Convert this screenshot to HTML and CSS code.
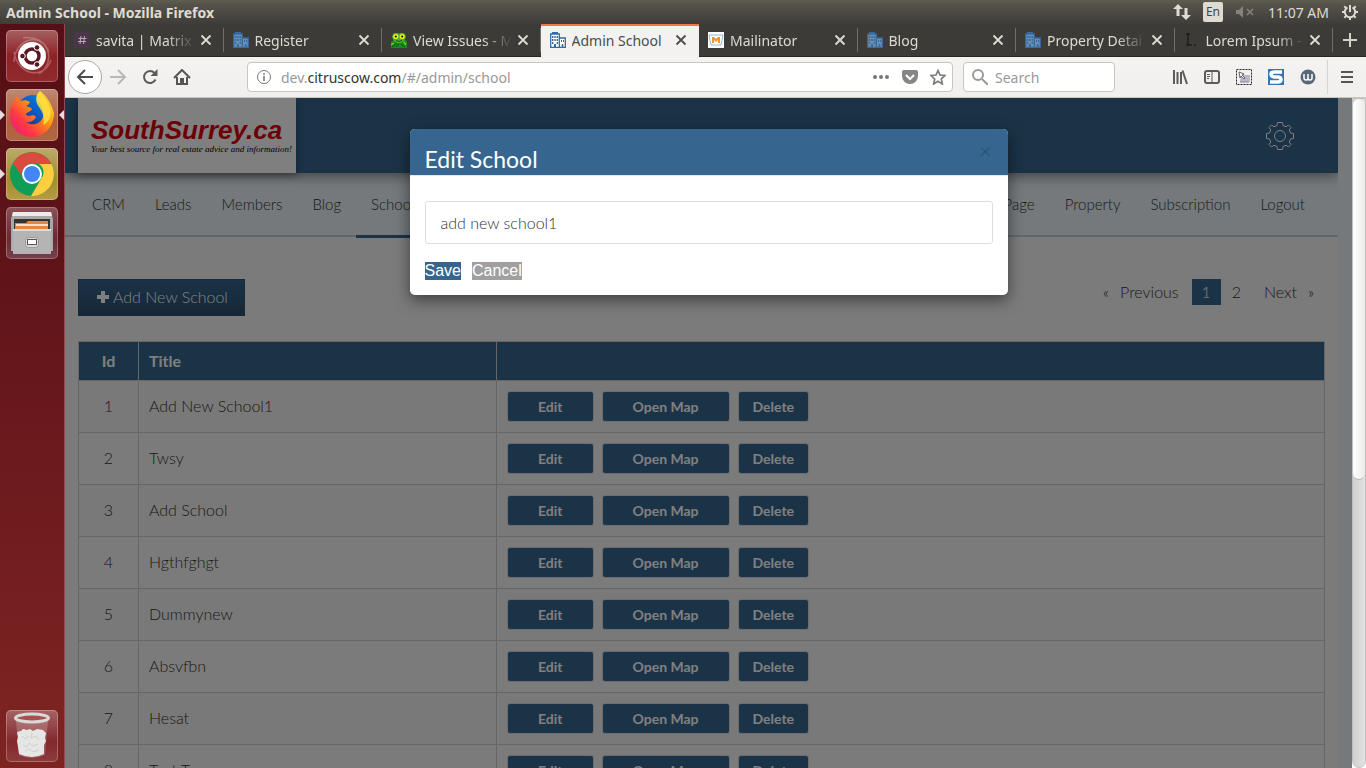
FILE: index.html
```html
<!DOCTYPE html>
<html lang="en">
<head>
<meta charset="utf-8">
<title>Admin School</title>
<link rel="stylesheet" href="styles.css">
</head>
<body>
<svg class="defs" width="0" height="0" aria-hidden="true">
  <symbol id="building" viewBox="0 0 16 16">
    <path class="wall" d="M1 2h8v13H1zM10 6h5v9h-5z"/>
    <path d="M2 .7h6M.7 15.500V2h8.600v13.500M9.500 6h5.800v9.500M0 15.500h16" stroke="#356b9f" stroke-width="1.300" fill="none"/>
    <path d="M2 4h1.400v2H2zM4.300 4h1.400v2H4.300zM6.600 4H8v2H6.600zM2 7h1.400v2H2zM4.300 7h1.400v2H4.300zM6.600 7H8v2H6.600zM2 10h1.400v2H2zM6.600 10H8v2H6.600zM4 12h2v3.500H4zM11 8h1v2h-1zM13 8h1v2h-1zM11.700 12h1.600v3.500h-1.600z" fill="#356b9f"/>
  </symbol>
  <symbol id="x" viewBox="0 0 12 12"><path d="M1.500 1.500l9 9M10.500 1.500l-9 9" stroke="currentColor" stroke-width="1.800" fill="none"/></symbol>
</svg>

<header class="panel">
  <span class="panel-title">Admin School - Mozilla Firefox</span>
  <div class="indicators">
    <svg width="18" height="18" viewBox="0 0 18 18" fill="#dfdbd2"><path d="M5 1L0 6h3.500v7h3V6H10zM13 17l5-5h-3.500V5h-3v7H8z"/></svg>
    <span class="lang">En</span>
    <svg class="mute" width="18" height="12" viewBox="0 0 18 12"><path d="M0 4h3l4-4v12L3 8H0z" fill="#85827a"/><path d="M11 3l6 6M17 3l-6 6" stroke="#85827a" stroke-width="1.500"/></svg>
    <span class="clock">11:07 AM</span>
    <svg width="16" height="16" viewBox="0 0 16 16" fill="none" stroke="#dfdbd2"><path d="M5.500 3.400a5.200 5.200 0 1 0 5 0" stroke-width="2"/><path d="M8 1v7" stroke-width="2"/><path d="M0 8h2M14 8h2M8 14v2M2.300 2.300l1.600 1.600M13.700 2.300l-1.600 1.600M2.300 13.700l1.600-1.600M13.700 13.700l-1.600-1.600" stroke-width="2"/></svg>
  </div>
</header>

<div class="desktop">
  <aside class="launcher">
    <div class="app dash">
      <svg width="52" height="52" viewBox="0 0 52 52"><g fill="none" stroke="#e5b3b3" stroke-opacity=".4" stroke-width="1.500"><path d="M8 32C8 10 34 0 43 22M17 8c26-4 34 24 16 36M45 30C38 50 12 46 8 22"/></g><circle cx="26" cy="26" r="14" fill="#fff"/><circle cx="26" cy="26" r="7" fill="none" stroke="#5b1820" stroke-width="3.500"/><g fill="#5b1820" stroke="#fff"><circle cx="16.500" cy="26" r="2.800"/><circle cx="31" cy="17.500" r="2.800"/><circle cx="31" cy="34.500" r="2.800"/></g></svg>
    </div>
    <div class="app fox running focused">
      <svg width="52" height="52" viewBox="0 0 52 52">
        <defs><linearGradient id="fx" x1="1" y1="0" x2="0" y2="1"><stop offset="0" stop-color="#fff44f"/><stop offset=".4" stop-color="#ff980e"/><stop offset=".7" stop-color="#ff3647"/><stop offset="1" stop-color="#e31587"/></linearGradient><linearGradient id="fb" x1="1" y1="0" x2="0" y2="1"><stop offset="0" stop-color="#0090ff"/><stop offset="1" stop-color="#1b2080"/></linearGradient></defs>
        <circle cx="27" cy="22" r="16" fill="url(#fb)"/>
        <path d="M11 7c1 3 2 4 4 5 3-1 6-1 9 1-1 2-2 3-4 4 2 1 5 1 6 3-1 3-5 3-6 5 0 1 1 2 3 2 3 0 4-2 7 1-2 4-6 6-10 5 6 4 14 3 17-5 2-6-1-11-5-16-2-4-1-7 2-10 4 3 11 10 14 22 0 14-10 24-22 24S4 39 4 26c0-7 3-14 7-19z" fill="url(#fx)"/>
        <path d="M34 2c3 6 8 11 10 17 2 8-1 14-7 17 2-7 0-13-4-18-4-6-4-11 1-16z" fill="#ffe23e" fill-opacity=".85"/>
      </svg>
    </div>
    <div class="app chrome running">
      <svg width="52" height="52" viewBox="0 0 52 52"><circle cx="26" cy="26" r="22" fill="#109d58"/><path d="M7 15A22 22 0 0 1 45.500 16H26a10 10 0 0 0-9 14z" fill="#db4a3e"/><path d="M45.500 16A22 22 0 0 1 25 48l10-17a10 10 0 0 0-2-15z" fill="#ffcd40"/><circle cx="26" cy="26" r="10" fill="#fff"/><circle cx="26" cy="26" r="8" fill="#4285f4"/></svg>
    </div>
    <div class="app files">
      <svg width="52" height="52" viewBox="0 0 52 52"><path d="M7 5h38l2 7v32H5V12z" fill="#a9a9a9"/><path d="M7 5h38l1 4H6z" fill="#ececec"/><path d="M8 12h36v12H8z" fill="#333"/><path d="M9 16h11l2-2h20v9H9z" fill="#f0833a"/><path d="M10 18h32" stroke="#fff" stroke-width="1.500"/><path d="M7 22h38v25H7z" fill="#b4b4b4"/><path d="M7 22h38v2H7z" fill="#dcdcdc"/><rect x="19.500" y="30.500" width="13" height="10" rx="3" fill="#d9d9d9" stroke="#999"/><rect x="21.500" y="32.500" width="9" height="5" fill="#fff" stroke="#555"/></svg>
    </div>
    <div class="app trash">
      <svg width="52" height="52" viewBox="0 0 52 52"><path d="M10 11l3 34q13 6 26 0l3-34z" fill="#fff" fill-opacity=".2"/><path d="M11 22l4-1 2-2 4 1 3-1 3 2 4-2 6 1 3 3-1 5 1 3-2 4v9q-12 6-25 0l-1-7-1-6 1-4z" fill="#e6e7e4"/><path d="M16 26l3 3 4-3M26 23l-1 5 5-2 3 4M17 35l4 2 2-4 4 3 5-2M19 41l4-2 4 3 6-2" fill="none" stroke="#cdd0cb"/><ellipse cx="26" cy="8" rx="16.500" ry="4" fill="#a85050" stroke="#d8dad7" stroke-width="3"/></svg>
    </div>
  </aside>

  <main class="window">
    <nav class="tabs" aria-label="Browser tabs">
      <div class="tab"><svg width="16" height="16"><rect width="16" height="16" fill="#4a3549"/><path d="M7 4L6 12M10.500 4l-1 8M4.500 6.500h8M4 9.500h8" stroke="#b9a9b8"/></svg><span>savita | Matrix</span><button aria-label="Close tab"><svg width="12" height="12"><use href="#x"/></svg></button></div>
      <div class="tab"><svg width="16" height="16"><use href="#building"/></svg><span>Register</span><button aria-label="Close tab"><svg width="12" height="12"><use href="#x"/></svg></button></div>
      <div class="tab"><svg width="16" height="16" viewBox="0 0 16 16"><path d="M0 10l4-3h8l4 2v7H0z" fill="#1c8a22"/><path d="M2 2l2-1h3l1 1 1-1h3l2 1 1 3-2 4-3 2H6L3 9 1 5z" fill="#4bb52b"/><circle cx="4.800" cy="4.500" r="2.500" fill="#f8ec1e"/><circle cx="11.200" cy="4.500" r="2.500" fill="#f8ec1e"/><circle cx="4.800" cy="4.500" r="1"/><circle cx="11.200" cy="4.500" r="1"/><path d="M5 8.500q3 2 6 0M1 15l5-4M10 12l4 3M5 15l3-3" stroke="#0b5010" fill="none"/><path d="M0 13l3-2M13 10l2 3" stroke="#5fd030" stroke-width="1.500"/></svg><span>View Issues - M</span><button aria-label="Close tab"><svg width="12" height="12"><use href="#x"/></svg></button></div>
      <div class="tab active"><svg width="16" height="16"><use href="#building"/></svg><span>Admin School</span><button aria-label="Close tab"><svg width="12" height="12"><use href="#x"/></svg></button></div>
      <div class="tab"><svg width="16" height="16" viewBox="0 0 16 16"><path fill="#fff" d="M0 0h16v16H0z"/><path d="M1 3h14l-2 10H3z" fill="none" stroke="#8fb4df"/><path d="M4 11V5h2l2 2 2-2h2v6h-2V8l-2 2-2-2v3z" fill="#f0952b"/></svg><span>Mailinator</span><button aria-label="Close tab"><svg width="12" height="12"><use href="#x"/></svg></button></div>
      <div class="tab"><svg width="16" height="16"><use href="#building"/></svg><span>Blog</span><button aria-label="Close tab"><svg width="12" height="12"><use href="#x"/></svg></button></div>
      <div class="tab"><svg width="16" height="16"><use href="#building"/></svg><span>Property Detai</span><button aria-label="Close tab"><svg width="12" height="12"><use href="#x"/></svg></button></div>
      <div class="tab"><svg width="16" height="16"><path d="M2 2h4M4 2v11M2 13h6M10 13h2" stroke="#111" fill="none"/></svg><span>Lorem Ipsum -</span><button aria-label="Close tab"><svg width="12" height="12"><use href="#x"/></svg></button></div>
      <button class="new-tab" aria-label="New tab"><svg width="16" height="16"><path d="M8 1v14M1 8h14" stroke="#d4d1c9" stroke-width="2"/></svg></button>
    </nav>

    <div class="toolbar">
      <button class="back" aria-label="Back"><svg width="18" height="16" fill="none" stroke="#4c4c4c" stroke-width="2"><path d="M17 8H2M9 1L2 8l7 7"/></svg></button>
      <button class="tool" aria-label="Forward"><svg width="18" height="16" fill="none" stroke="#b9b8b7" stroke-width="2"><path d="M1 8h15M9 1l7 7-7 7"/></svg></button>
      <button class="tool" aria-label="Reload"><svg width="16" height="16" fill="none" stroke="#5a5a5a" stroke-width="2"><path d="M13.500 10.500A6 6 0 1 1 12.500 4"/><path d="M15.500 0v7h-7z" fill="#5a5a5a" stroke="none"/></svg></button>
      <button class="tool" aria-label="Home"><svg width="18" height="16" fill="none" stroke="#555" stroke-width="2"><path d="M1 9l8-8 8 8M4 8v7h10V8"/><path d="M8 15v-5h2v5" /></svg></button>
      <div class="urlbar">
        <svg width="16" height="16" fill="none" stroke="#777"><circle cx="8" cy="8" r="6.500"/><path d="M8 7v5M8 4v1.800" stroke-width="1.600"/></svg>
        <span class="url">dev.<b>citruscow.com</b>/#/admin/school</span>
        <svg width="18" height="6" fill="#777"><circle cx="3" cy="3" r="2"/><circle cx="9" cy="3" r="2"/><circle cx="15" cy="3" r="2"/></svg>
        <svg width="16" height="16"><path d="M2 1h12q2 0 2 2v4a8 8 0 0 1-16 0V3q0-2 2-2z" fill="#858585"/><path d="M4 6l4 4 4-4" stroke="#fff" stroke-width="2" fill="none"/></svg>
        <svg width="16" height="16" viewBox="0 0 16 16"><path d="M8 1.500l2 4.500 5 .5-3.700 3.400 1 5L8 12.300 3.700 15l1-5L1 6.500 6 6z" fill="none" stroke="#7d7d7d" stroke-width="1.700"/></svg>
      </div>
      <div class="search"><svg width="16" height="16" fill="none" stroke="#999" stroke-width="2"><circle cx="6" cy="6" r="5"/><path d="M10 10l6 6"/></svg><input type="text" placeholder="Search" aria-label="Search"></div>
      <div class="extensions">
        <svg width="16" height="16" fill="none" stroke="#5b5b5b" stroke-width="2"><path d="M2 1v14M5.500 3v12M9 3v12M10.500 1.500L15 15"/></svg>
        <svg width="16" height="16" fill="none" stroke="#5b5b5b"><rect x="1" y="2" width="14" height="12" rx="2" stroke-width="2"/><path d="M8 2v12M3 5.500h3M3 7.500h3M3 9.500h2"/></svg>
        <svg width="16" height="16" fill="none"><rect x=".5" y=".5" width="15" height="15" stroke="#222" stroke-dasharray="2 1"/><path fill="#b7bac9" d="M6 6h8v7H4v-2z"/><path d="M3 3l5 2-2 1 3 3-1 1-3-3-1 2z" fill="#fff" stroke="#444" stroke-width=".8"/><path d="M4 13h9" stroke="#888"/></svg>
        <svg width="16" height="16"><path d="M0 0h16v16H0z" fill="#3178b4"/><path d="M14 3H6.500Q3 3 3 5.200T6.500 8h3Q13 8 13 10.500T9.500 13H2" fill="none" stroke="#fff" stroke-width="3.500"/></svg>
        <svg width="16" height="16"><circle cx="8" cy="8" r="7.500" fill="#596779"/><path d="M4 5v4q0 2 2 2t2-2V5v4q0 2 2 2t2-2V5" fill="none" stroke="#fff" stroke-width="1.500"/></svg>
      </div>
      <button class="menu" aria-label="Menu"><svg width="12" height="14"><path d="M0 2h12M0 7h12M0 12h12" stroke="#555" stroke-width="2"/></svg></button>
    </div>

    <div class="viewport">
      <div class="page">
        <div class="site">
          <div class="site-header">
            <div class="logo"><strong>SouthSurrey.ca</strong><em>Your best source for real estate advice and information!</em></div>
            <svg class="gear" width="30" height="30" viewBox="0 0 30 30" fill="none" stroke="#fff"><circle cx="15" cy="15" r="5.500"/><path d="M12.500 1.500h5l.5 3 3 1.300 2.500-1.800 2.500 2.500-1.800 2.500 1.300 3 3 .5v5l-3 .5-1.300 3 1.800 2.500-2.500 2.500-2.500-1.800-3 1.300-.5 3h-5l-.5-3-3-1.300L6.500 26 4 23.500 5.800 21l-1.300-3-3-.5v-5l3-.5 1.300-3L4 6.500 6.500 4 9 5.800l3-1.300z"/></svg>
          </div>
          <nav class="site-nav">
            <a href="#">CRM</a><a href="#">Leads</a><a href="#">Members</a><a href="#">Blog</a><a href="#" class="current">Schools</a>
            <a href="#" class="push">Page</a><a href="#">Property</a><a href="#">Subscription</a><a href="#">Logout</a>
          </nav>
          <div class="content">
            <div class="actions">
              <button class="add"><svg width="12" height="12"><path d="M6 0v12M0 6h12" stroke="#fff" stroke-width="4"/></svg>Add New School</button>
              <div class="pager"><small>«</small><a href="#">Previous</a><a href="#" class="on">1</a><a href="#" class="num">2</a><a href="#" class="next">Next</a><small>»</small></div>
            </div>
            <table>
              <thead><tr><th class="id">Id</th><th class="title">Title</th><th></th></tr></thead>
              <tbody>
                <tr><td>1</td><td>Add New School1</td><td><div class="row-buttons"><button>Edit</button><button>Open Map</button><button>Delete</button></div></td></tr>
                <tr><td>2</td><td>Twsy</td><td><div class="row-buttons"><button>Edit</button><button>Open Map</button><button>Delete</button></div></td></tr>
                <tr><td>3</td><td>Add School</td><td><div class="row-buttons"><button>Edit</button><button>Open Map</button><button>Delete</button></div></td></tr>
                <tr><td>4</td><td>Hgthfghgt</td><td><div class="row-buttons"><button>Edit</button><button>Open Map</button><button>Delete</button></div></td></tr>
                <tr><td>5</td><td>Dummynew</td><td><div class="row-buttons"><button>Edit</button><button>Open Map</button><button>Delete</button></div></td></tr>
                <tr><td>6</td><td>Absvfbn</td><td><div class="row-buttons"><button>Edit</button><button>Open Map</button><button>Delete</button></div></td></tr>
                <tr><td>7</td><td>Hesat</td><td><div class="row-buttons"><button>Edit</button><button>Open Map</button><button>Delete</button></div></td></tr>
                <tr><td>8</td><td>Test Two</td><td><div class="row-buttons"><button>Edit</button><button>Open Map</button><button>Delete</button></div></td></tr>
              </tbody>
            </table>
          </div>
        </div>
        <div class="backdrop">
          <form class="modal" role="dialog" aria-labelledby="modal-title">
            <div class="modal-head"><h2 id="modal-title">Edit School</h2><button type="button" aria-label="Close">×</button></div>
            <div class="modal-body">
              <input type="text" value="add new school1" aria-label="School title">
              <div class="modal-actions"><button type="button" class="save">Save</button><button type="button" class="cancel">Cancel</button></div>
            </div>
          </form>
        </div>
      </div>
      <div class="scrollbar"><div class="thumb"></div></div>
    </div>
  </main>
</div>
</body>
</html>
```
FILE: styles.css
```css
* { box-sizing: border-box; }
body { margin: 0; height: 100vh; overflow: hidden; display: flex; flex-direction: column; font-family: "Noto Sans", "Open Sans", sans-serif; font-size: 14px; }
button { border: 0; padding: 0; background: none; font: inherit; color: inherit; }
a { color: inherit; text-decoration: none; }
svg { display: block; flex: none; }
.defs { position: absolute; }

.panel { height: 24px; flex: none; display: flex; align-items: center; justify-content: space-between; padding: 0 8px 0 6px; background: linear-gradient(#5f5c50, #55524a 20%, #3e3d39); color: #dfdbd2; }
.panel-title { font-weight: 700; }
.indicators { display: flex; align-items: center; }
.lang { margin: 0 13px 0 12px; width: 20px; height: 20px; border-radius: 2px; background: #dfdbd2; color: #45443f; font-size: 12px; line-height: 20px; text-align: center; }
.clock { margin: 0 13px 0 14px; }

.desktop { flex: 1; min-height: 0; display: flex; }
.launcher { width: 65px; flex: none; display: flex; flex-direction: column; gap: 7px; padding: 6px 0 6px 6px; background: linear-gradient(#560f16, #5e1319 30%, #7b2222 90%, #7d2421); border-right: 1px solid #8e4a4c; }
.app { width: 52px; height: 52px; position: relative; border-radius: 5px; box-shadow: inset 0 0 0 1px #ffffff40; }
.dash { background: linear-gradient(#a56061, #8e2226 50%, #8f2b2e); }
.fox { background: linear-gradient(#bd8a73, #b35f3b 60%, #ae6743); }
.chrome { background: linear-gradient(#bbab6d, #a58b2c 60%, #b59d47); }
.files { background: linear-gradient(#8b5258, #6b2931 60%, #78404a); }
.trash { margin-top: auto; background: linear-gradient(#a76365, #83282b 60%, #8e3c3d); }
.running::before, .focused::after { content: ""; position: absolute; top: 21px; border: 5px solid transparent; }
.running::before { left: -6px; border-left-color: #e6dede; border-right: 0; }
.focused::after { right: -6px; border-right-color: #e6dede; border-left: 0; }

.window { flex: 1; min-width: 0; display: flex; flex-direction: column; }
.tabs { height: 33px; flex: none; display: flex; background: #3c3b37; border-bottom: 1px solid #282724; color: #dfdbd2; }
.tab { --wall: #6c8fb3; flex: 1; min-width: 0; display: flex; align-items: center; padding: 0 12px 0 9px; gap: 6px; background: linear-gradient(#716f69, #716f69) right center / 1px 24px no-repeat; }
.tab span { flex: 1; min-width: 0; overflow: hidden; white-space: nowrap; mask-image: linear-gradient(to right, #000 70px, transparent 99px); }
.tab.active { --wall: #fff; height: 33px; padding-bottom: 3px; background: #f4f2f1; border-top: 2px solid #f07746; color: #4c4c4c; }
.tab.active span { mask-image: none; }
.wall { fill: var(--wall); }
.new-tab { width: 33px; display: grid; place-items: center; }

.toolbar { height: 41px; flex: none; display: flex; align-items: center; padding: 0 13px 0 3px; background: linear-gradient(#f5f3f2, #f1efee); border-bottom: 1px solid #cbc7c3; }
.back { width: 34px; height: 34px; border: 1px solid #aaa7a4; border-radius: 50%; background: #fff; display: grid; place-items: center; }
.tool { width: 32px; display: grid; place-items: center; }
.urlbar, .search { height: 30px; display: flex; align-items: center; border: 1px solid #c9c5c1; border-radius: 4px; background: #fff; }
.urlbar { flex: 1; margin: 0 10px 0 49px; padding: 0 6px 0 8px; gap: 12px; }
.url { flex: 1; margin-left: -3px; color: #999; }
.url b { font-weight: 400; color: #333; }
.search { width: 152px; padding: 0 8px; gap: 7px; }
.search input { border: 0; padding: 0; width: 100%; outline: 0; font: inherit; background: none; }
.search input::placeholder { color: #999; opacity: 1; }
.extensions { display: flex; gap: 16px; margin-left: 57px; padding-right: 11px; border-right: 1px solid #d6d3d0; height: 34px; align-items: center; }
.menu { margin-left: 13px; }

.viewport { flex: 1; min-height: 0; display: flex; }
.page { flex: 1; min-width: 0; position: relative; overflow: hidden; padding-right: 14px; background: #eaf2f8; font-family: Lato, sans-serif; font-size: 16px; font-weight: 300; color: #333; }
.site { background: #f7f7f7; }
.site-header { position: relative; height: 75px; display: flex; justify-content: space-between; align-items: center; padding: 0 43px 0 13px; background: #36668f; box-shadow: 0 3px 12px #00000073; clip-path: inset(0 0 -20px 0); }
.logo { height: 75px; width: 218px; padding: 18px 0 0 13px; background: #fff; box-shadow: 0 2px 8px #00000066; font-style: italic; white-space: nowrap; }
.logo strong { display: block; font: italic 700 26px/28px "Liberation Sans", sans-serif; color: #d8000e; }
.logo em { display: block; font: italic 300 9px/10px "Liberation Serif", serif; color: #000; }
.site-nav { height: 64px; display: flex; padding: 0 18px 0 12px; background: #eaf2f8; border-bottom: 2px solid #c5ccd2; font-size: 15px; }
.site-nav a { height: 65px; padding: 0 15px; line-height: 62px; }
.site-nav .current { border-bottom: 3px solid #36668f; }
.site-nav .push { margin-left: auto; }

.content { padding: 42px 13px 0; }
.actions { display: flex; justify-content: space-between; align-items: flex-start; margin-bottom: 25px; }
.add { height: 37px; padding: 0 16px 2px 18px; display: flex; align-items: center; gap: 4px; color: #fff; border: 1px solid #2b5375; background: linear-gradient(#36668f, #2a4f6e); }
.pager { display: flex; line-height: 26px; padding-right: 11px; }
.pager small { font-size: 15px; }
.pager a { margin-left: 11px; }
.pager .on { width: 29px; margin-left: 13px; text-align: center; background: #36668f; color: #fff; }
.pager .next { margin: 0 11px 0 23px; }

table { width: 100%; table-layout: fixed; border-collapse: collapse; }
th, td { border: 1px solid #ccc; padding: 0 10px 2px; text-align: left; }
th { height: 39px; background: #36668f; color: #fff; font-weight: 700; }
td { height: 52px; }
td:last-child { padding-bottom: 0; }
.id { width: 60px; }
.title { width: 358px; }
th:first-child, td:first-child { text-align: center; }
tbody tr:nth-child(odd) { background: #f2f2f2; }
.row-buttons { display: flex; gap: 8px; }
.row-buttons button { height: 31px; padding: 0 30px; border: 1px solid #d5dde4; border-radius: 3px; background: #36668f; color: #fff; font-weight: 700; font-size: 14px; }
.row-buttons button:last-child { padding: 0 14px; }

.backdrop { position: absolute; inset: 0; display: flex; justify-content: center; align-items: flex-start; padding-top: 31px; background: #00000080; }
.modal { width: 598px; border-radius: 5px; overflow: hidden; background: #fff; box-shadow: 0 5px 15px #00000080; }
.modal-head { height: 47px; display: flex; justify-content: space-between; padding: 15px 16px 0 15px; background: #36668f; border-bottom: 1px solid #e5e5e5; color: #fff; }
.modal-head h2 { margin: 0; font-size: 23px; line-height: 30px; font-weight: 400; }
.modal-head button { height: 14px; line-height: 12px; font-size: 22px; color: #234a6c; }
.modal-body { padding: 25px 15px 15px; }
.modal-body input { display: block; width: 100%; height: 43px; padding: 0 15px; border: 1px solid #ddd; border-radius: 3px; font: 300 16px Lato, sans-serif; color: #333; }
.modal-actions { display: flex; gap: 11px; margin-top: 18px; font: 16px/18px "Liberation Sans", Arial, sans-serif; color: #fff; }
.save { background: #36668f; }
.cancel { background: #a0a0a0; }

.scrollbar { width: 14px; flex: none; background: linear-gradient(to right, #cfcfcf, #e3e3e3); border: 1px solid #c2c0be; border-radius: 0 0 7px 7px; }
.thumb { height: 57%; border-radius: 7px; background: linear-gradient(to right, #fff, #ecebea); border-bottom: 1px solid #bbb; }
```
